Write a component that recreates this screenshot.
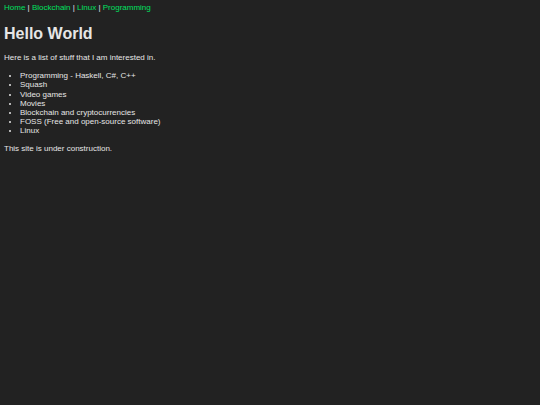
import React from "react";

const links = ["Home", "Blockchain", "Linux", "Programming"];

const interests = [
  "Programming - Haskell, C#, C++",
  "Squash",
  "Video games",
  "Movies",
  "Blockchain and cryptocurrencies",
  "FOSS (Free and open-source software)",
  "Linux",
];

export default function App() {
  return (
    <div className="min-h-screen bg-[#222222] text-[#e6e6e6] font-['Liberation_Sans',Arial,sans-serif] text-[8px] leading-[1.15] px-[4px] pt-[3px]">
      <nav>
        {links.map((l, i) => (
          <React.Fragment key={l}>
            {i > 0 && " | "}
            <a href="#" className="text-[#00e060]">
              {l}
            </a>
          </React.Fragment>
        ))}
      </nav>

      <h1 className="text-[16px] font-bold mt-[12.5px] mb-[10px]">Hello World</h1>

      <p className="mt-[8px] mb-[9px]">Here is a list of stuff that I am interested in.</p>

      <ul className="list-disc pl-[16px] mt-[8px] mb-[8px]">
        {interests.map((item) => (
          <li key={item}>{item}</li>
        ))}
      </ul>

      <p className="my-[8px]">This site is under construction.</p>
    </div>
  );
}
